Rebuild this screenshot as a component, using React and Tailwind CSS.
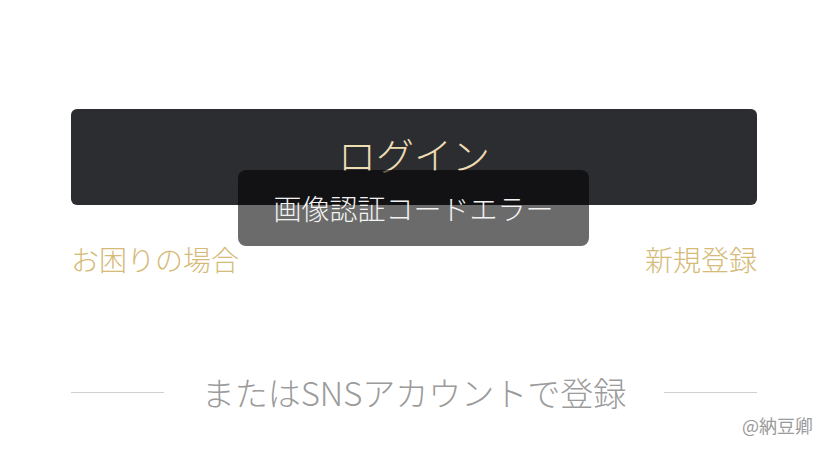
export default function App() {
  const font = { fontFamily: '"Noto Sans CJK JP", "Noto Sans", sans-serif' };
  return (
    <div className="relative w-[828px] h-[453px] bg-white overflow-hidden" style={font}>
      <div className="px-[71px] pt-[109px]">
        <div className="h-[96px] rounded-[6px] bg-[#2c2d31] flex items-center justify-center">
          <span className="text-[38px] font-light text-[#eedcb3] leading-none -mt-[6px]">ログイン</span>
        </div>
        <div className="mt-[34px] h-[40px] flex items-center justify-between text-[28px] font-light text-[#d5ba78] leading-none">
          <span>お困りの場合</span>
          <span>新規登録</span>
        </div>
        <div className="mt-[91px] h-[44px] flex items-center">
          <div className="w-[93px] h-px bg-[#cfcfcf]" />
          <div className="flex-1 text-center text-[33px] font-light text-[#9b9b9b] leading-none">またはSNSアカウントで登録</div>
          <div className="w-[93px] h-px bg-[#cfcfcf]" />
        </div>
      </div>
      <div className="absolute left-[238px] top-[170px] w-[351px] h-[76px] rounded-[8px] bg-black/[0.58] flex items-center justify-center">
        <span className="text-[28px] font-light text-[#f2f2f2] leading-none">画像認証コードエラー</span>
      </div>
      <div className="absolute left-[742px] top-[416px] text-[18px] text-[#9a9a9a] leading-none">@納豆卿</div>
    </div>
  );
}
